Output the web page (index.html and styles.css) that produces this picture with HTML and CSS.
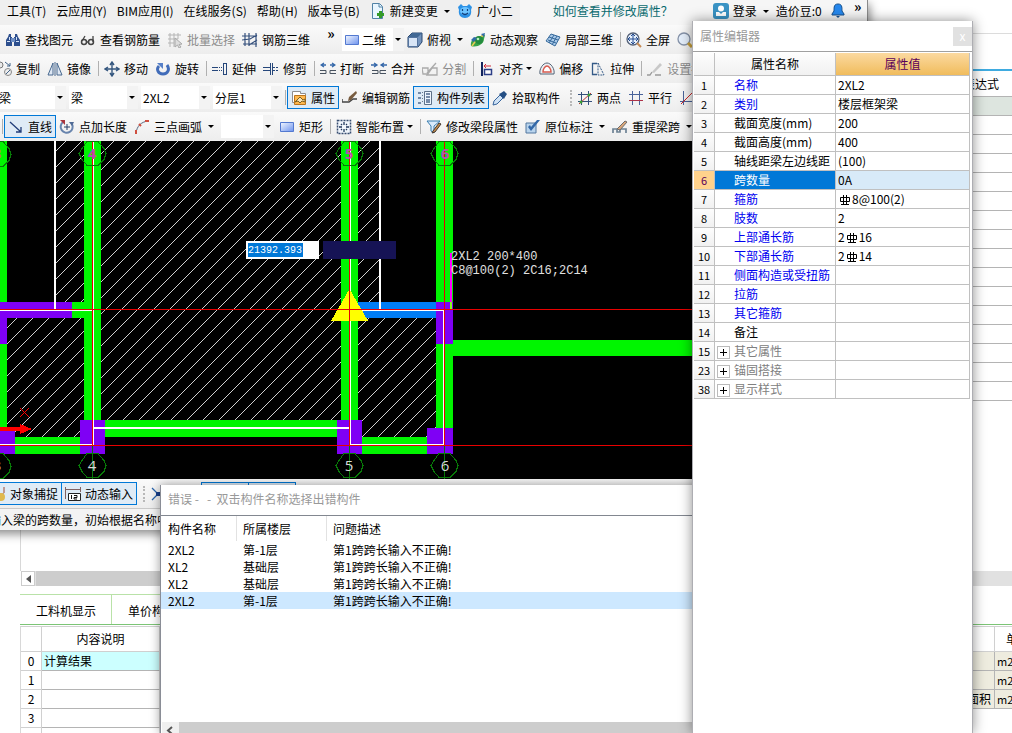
FILE: index.html
```html
<!DOCTYPE html>
<html lang="zh-CN">
<head>
    <meta charset="UTF-8">
    <meta name="viewport" content="width=device-width, initial-scale=1.0">
    <title>属性编辑器</title>
    <link rel="stylesheet" href="styles.css">
</head>
<body>
    <svg class="defs" aria-hidden="true">
        <symbol id="i-find" viewBox="0 0 16 16"><path d="M4 2h2v3h1v9H1V8l2-3zM10 2h2l1 3 2 3v6H9V5h1z" fill="#2d4f8e"/><path d="M6 6h4v4H6z" fill="#6f8fc4"/><path d="M2 9h3v1H2zM11 9h3v1h-3zM4 5h1v3H4zM11 5h1v3h-1z" fill="#d4e2f6"/></symbol>
        <symbol id="i-glasses" viewBox="0 0 16 16"><circle cx="4" cy="10" r="2.5" fill="none" stroke="#444" stroke-width="1.5"/><circle cx="11" cy="10" r="2.5" fill="none" stroke="#444" stroke-width="1.5"/><path d="M2 9l3-5M13 10V4M6 10h3" stroke="#444" fill="none" stroke-width="1.3"/></symbol>
        <symbol id="i-batch" viewBox="0 0 16 16"><path d="M3 1v14M7 1v14M11 1v6M1 3h13M1 7h10M1 11h6" stroke="#b5b5b5" fill="none"/><path d="M8 6l7 6-3 .5 2 2.500-2 1-1.500-3-2.500 2z" fill="#ddd" stroke="#aaa"/></symbol>
        <symbol id="i-rebar3d" viewBox="0 0 16 16"><path d="M3 1v13M7 1v13M14 1v14M0 4h15M0 8l8-1 7-4M1 12h14M7 13l8-5" stroke="#35507c" fill="none" stroke-width="1.200"/></symbol>
        <symbol id="i-rect" viewBox="0 0 16 16"><defs><linearGradient id="rg" x2="1" y2="1"><stop stop-color="#f4f8ff"/><stop offset="1" stop-color="#6c92ee"/></linearGradient></defs><path d="M1.500 3.500h13v9h-13z" fill="url(#rg)" stroke="#5379d0"/></symbol>
        <symbol id="i-cube" viewBox="0 0 16 16"><path d="M1 5l4-4h10v9l-4 5H1z" fill="#7393bd" stroke="#28466f"/><path d="M1.500 5.500h9v9h-9z" fill="#d8e5f6" stroke="#54749f"/><path d="M2 5l3-4h10l-4 4z" fill="#416894"/></symbol>
        <symbol id="i-orbit" viewBox="0 0 16 16"><path d="M1 14C0 8 5 4 10 5l3-3 2 1-1 4C14 12 7 16 1 14z" fill="#3aa348"/><path d="M2 14c3-5 6-8 12-11" stroke="#e9ca54" stroke-width="1.500" fill="none"/><circle cx="9" cy="8" r="4" fill="#238b3e"/><path d="M1 8l3-3 3 1-3 4zM11 2l4-1-1 4z" fill="#306ba8"/><circle cx="8" cy="7" r="1.300" fill="#b7eeba"/></symbol>
        <symbol id="i-local" viewBox="0 0 16 16"><path d="M1 9l5-7 9 3-5 9z" fill="#a9c9e8" stroke="#36699b"/><path d="M4 5l9 3M3 8l8 3M9 3l-5 8M12 4l-5 9" stroke="#36699b" fill="none"/></symbol>
        <symbol id="i-full" viewBox="0 0 16 16"><circle cx="7" cy="7" r="6" fill="#e9f2fd" stroke="#556178" stroke-width="1.300"/><path d="M7 2v10M2 7h10M5 4l2-2 2 2M5 10l2 2 2-2M4 5L2 7l2 2M10 5l2 2-2 2" stroke="#244c91" fill="none"/><path d="M11 11l4 4" stroke="#c58a54" stroke-width="2"/></symbol>
        <symbol id="i-zoom" viewBox="0 0 16 16"><circle cx="7" cy="7" r="6" fill="#e5effb" stroke="#8592a8" stroke-width="1.300"/><path d="M11 11l4 4" stroke="#c9a13c" stroke-width="3"/></symbol>
        <symbol id="i-copy" viewBox="0 0 16 16"><circle cx="4" cy="4" r="3" fill="#e9e9e9" stroke="#777"/><circle cx="12" cy="11" r="3.500" fill="#eee" stroke="#888"/><path d="M10 13l4-4M9 1l5 4M14 2v3h-3" stroke="#436489" fill="none"/></symbol>
        <symbol id="i-mirror" viewBox="0 0 16 16"><path d="M6 2v12H1zM10 2v12h5z" fill="#dfe8f4" stroke="#48698f"/><path d="M8 1v14" stroke="#48698f"/></symbol>
        <symbol id="i-move" viewBox="0 0 16 16"><path d="M8 1v14M1 8h14M6 4l2-3 2 3M6 12l2 3 2-3M4 6L1 8l3 2M12 6l3 2-3 2" stroke="#35577f" fill="none" stroke-width="1.400"/></symbol>
        <symbol id="i-rotate" viewBox="0 0 16 16"><path d="M12 4c3 4 1 9-4 9S1 8 4 5" stroke="#416cb9" stroke-width="3" fill="none"/><path d="M2 2h6v6z" fill="#5780c8"/></symbol>
        <symbol id="i-extend" viewBox="0 0 16 16"><path d="M0 6.500h6M0 9.500h6M11.500 2v12M14.500 2v12M11 2.500h4M11 13.500h4" stroke="#26477b" fill="none"/><path d="M7 6.500h4M7 9.500h4" stroke="#26477b" stroke-dasharray="1 1"/></symbol>
        <symbol id="i-trim" viewBox="0 0 16 16"><path d="M0 6.500h7M0 9.500h7M7.500 2v12M9.500 2v12" stroke="#26477b" fill="none"/><path d="M10 6.500h6M10 9.500h6" stroke="#26477b" stroke-dasharray="2 1"/></symbol>
        <symbol id="i-break" viewBox="0 0 16 16"><path d="M2 4h4M10 4h4M4 2L1 4l3 2M12 2l3 2-3 2" stroke="#3467a9" fill="none" stroke-width="1.300"/><path d="M0 9.500h6v3H0M16 9.500h-6v3h6" fill="none" stroke="#47525f"/></symbol>
        <symbol id="i-merge" viewBox="0 0 16 16"><path d="M0 4h5M11 4h5M3 2l3 2-3 2M13 2l-3 2 3 2" stroke="#3467a9" fill="none" stroke-width="1.300"/><path d="M1 9.500h6v3H1M15 9.500H9v3h6" fill="none" stroke="#47525f"/></symbol>
        <symbol id="i-split" viewBox="0 0 16 16"><path d="M0 7h6v6H1zM15 7h-5L5 14h10zM5 12l9-10" fill="none" stroke="#aaa" stroke-width="1.300"/></symbol>
        <symbol id="i-align" viewBox="0 0 16 16"><path d="M3 1v14" stroke="#14255e" stroke-width="2"/><path d="M5 5h7M7 3L5 5l2 2" stroke="#d12b38" fill="none"/><path d="M5.500 8.500h7v5h-7z" fill="#fff" stroke="#2d3f87" stroke-width="1.500"/></symbol>
        <symbol id="i-offset" viewBox="0 0 16 16"><path d="M1 13C0 8 4 2 8 2s8 6 7 11z" fill="#ecf0f4" stroke="#536375"/><path d="M4 11c0-3 2-6 4-6s4 3 4 6z" fill="#fff" stroke="#d75b4f" stroke-width="1.400"/></symbol>
        <symbol id="i-stretch" viewBox="0 0 16 16"><path d="M7 2.500H2.500v11H7" fill="none" stroke="#345a87" stroke-width="1.300"/><path d="M8 2l6 12H8z" fill="none" stroke="#345a87" stroke-dasharray="2 1"/></symbol>
        <symbol id="i-brush" viewBox="0 0 16 16"><path d="M5 11l8-9 2 2-8 8z" fill="#c8c8c8"/><path d="M0 14h3l2-3M8 14h6" stroke="#999" fill="none" stroke-width="1.300"/></symbol>
        <symbol id="i-prop" viewBox="0 0 16 16"><path d="M1.500 1.500h8v2h5v9h-13z" fill="#fff" stroke="#8e8e8e"/><path d="M3.500 5.500h11v9h-11z" fill="#ffb84e" stroke="#bb751d"/><path d="M4 12l5-5 3 3 2-1v3l-3-1-2 2-2-2z" fill="#f8e3b9" stroke="#7b6021"/></symbol>
        <symbol id="i-edit" viewBox="0 0 16 16"><path d="M0 9v3h7l4-3h4" fill="none" stroke="#444" stroke-width="1.500"/><path d="M6 11l1-4 7-6 1 2-6 7z" fill="#785c3f"/></symbol>
        <symbol id="i-list" viewBox="0 0 16 16"><path d="M7.500 1.500h7v13h-7z" fill="#edf5ff" stroke="#5d7189"/><path d="M1 3h3M1 8h3M1 13h3M9 4h4M9 7h4M9 10h4M9 12h4" stroke="#506a8d" stroke-width="1.500"/><path d="M5.500 2v12" stroke="#6b7b90" stroke-dasharray="1 2"/></symbol>
        <symbol id="i-pick" viewBox="0 0 16 16"><path d="M1 15l1-4 6-6 3 3-6 6z" fill="#cfe2f5" stroke="#37649c"/><path d="M7 4l5 5 1-2 2-3-3-3-3 2z" fill="#244e83"/></symbol>
        <symbol id="i-two" viewBox="0 0 16 16"><path d="M4.500 2v13M11.500 1v14M1 4.500h14M1 11.500h14" stroke="#35507c" fill="none"/><path d="M2 14L14 3" stroke="#b33"/><circle cx="4" cy="12" r="1.500" fill="#3a9e35"/><circle cx="12" cy="5" r="1.500" fill="#3a9e35"/></symbol>
        <symbol id="i-par" viewBox="0 0 16 16"><path d="M4.500 1v14M11.500 1v14M1 4.500h14" stroke="#49639a" fill="none"/><path d="M1 10.500h14" stroke="#ad3349"/></symbol>
        <symbol id="i-angle" viewBox="0 0 16 16"><path d="M4.500 1v14M1 11.500h14" stroke="#49639a" fill="none"/><path d="M2 14L14 2" stroke="#c22"/></symbol>
        <symbol id="i-line" viewBox="0 0 16 16"><path d="M2 3l11 10M13 8v5H8" stroke="#223e79" fill="none" stroke-width="1.300"/></symbol>
        <symbol id="i-plen" viewBox="0 0 16 16"><path d="M4 3a6 6 0 1 0 9 2" stroke="#6884ad" fill="none" stroke-width="2"/><path d="M1 1h5v5z" fill="#a9353e"/><path d="M10 3h5l-2 4z" fill="#4f6a95"/><path d="M8 5v6M5 8h6" stroke="#273f69"/></symbol>
        <symbol id="i-arc" viewBox="0 0 16 16"><path d="M2 14C3 7 7 3 14 2" stroke="#56647c" fill="none"/><path d="M2 11v4M5 5l2 2M11 2h4" stroke="#cf4f3f" stroke-width="2"/></symbol>
        <symbol id="i-smart" viewBox="0 0 16 16"><path d="M1.500 1.500h13v13h-13z" fill="#f1f6fc" stroke="#374d70" stroke-dasharray="2 1" stroke-width="1.500"/><path d="M8 3v3M8 10v3M3 8h3M10 8h3M5 5l1 1M11 5l-1 1M5 11l1-1M11 11l-1-1" stroke="#20365b" stroke-width="1.300"/></symbol>
        <symbol id="i-seg" viewBox="0 0 16 16"><path d="M1 2h13L8 7v7l-3-2V7z" fill="#d8eafb" stroke="#397cae"/><path d="M7 12l6-8 2 1-6 8-3 1z" fill="#c58d4a" stroke="#403832"/></symbol>
        <symbol id="i-mark" viewBox="0 0 16 16"><path d="M1 4h10v10H1z" fill="#b9d4ed" stroke="#52779e"/><path d="M3 8l3 4 9-11-3 0-6 7-1-2z" fill="#3368a8"/></symbol>
        <symbol id="i-span" viewBox="0 0 16 16"><path d="M1 14v-4h4v3h3v-3h6v4" fill="none" stroke="#6d8294" stroke-width="1.700"/><path d="M5 10l8-8 2 1-7 8z" fill="#dba77a" stroke="#6d6d6d"/></symbol>
        <symbol id="i-new" viewBox="0 0 16 16"><path d="M2.500.5h7l3 3v12h-10z" fill="#e9f6ff" stroke="#5182a6"/><path d="M9 1v3h3" fill="none" stroke="#5182a6"/><path d="M10.500 8v7M7 11.500h7" stroke="#359b28" stroke-width="3"/></symbol>
        <symbol id="i-face" viewBox="0 0 16 16"><path d="M1 4l3-3 2 2h4l2-2 3 3-1 3c1 5-2 8-6 8s-7-3-6-8z" fill="#2c91e5"/><ellipse cx="8" cy="8" rx="5" ry="4" fill="#6cc3ff"/><path d="M5.500 6v2M10.500 6v2M5 10c2 2 4 2 6 0" fill="none" stroke="#113f7c" stroke-width="1.200"/></symbol>
        <symbol id="i-user" viewBox="0 0 16 16"><rect width="16" height="16" rx="3" fill="#3a93c4"/><circle cx="8" cy="5.500" r="3" fill="#fff"/><path d="M3 13V9h3l2 2 2-2h3v4z" fill="#fff"/></symbol>
        <symbol id="i-bell" viewBox="0 0 16 16"><path d="M8 1c4 0 4 3 4 7l2 3v1H2v-1l2-3c0-4 0-7 4-7z" fill="#2688ee" stroke="#17518d"/><path d="M6 13h4l-2 2z" fill="#17518d"/></symbol>
        <symbol id="i-snap" viewBox="0 0 16 16"><path d="M14 1v6M9 8h5" stroke="#9e4a35"/><circle cx="11" cy="11" r="4" fill="#e0b94e"/></symbol>
        <symbol id="i-dyn" viewBox="0 0 16 16"><path d="M.5 1v12M15.500 1v5M1 3.500h14" stroke="#816262" fill="none"/><path d="M3.500 7.500h12v7h-12z" fill="#fff" stroke="#222"/><path d="M6.500 9v4M9 9.500h3v2H9v1.500h3" stroke="#111" fill="none"/></symbol>
        <symbol id="i-cross" viewBox="0 0 16 16"><path d="M2 2l6 6-6 6M8 8h8" stroke="#2a65ad" fill="none" stroke-width="1.300"/><path d="M6 6h5v4H6z" fill="#173f8c"/></symbol>
        <symbol id="i-bar" viewBox="0 0 12 12"><path d="M1.500 3.500h9v4h-9zM4.500 1v10M7.500 1v10M2 10.500h8" stroke="#000" fill="none"/></symbol>
    </svg>

    <!-- 计价软件 -->
    <main class="budget">
        <div class="budget-head"></div>
        <div class="budget-bar"></div>
        <div class="budget-body">
            <table class="expr">
                <tr><th>表达式</th></tr>
                <tr class="current"><td></td></tr>
                <tr><td></td></tr><tr><td></td></tr><tr><td></td></tr><tr><td></td></tr><tr><td></td></tr>
                <tr><td></td></tr><tr><td></td></tr><tr><td></td></tr><tr><td></td></tr><tr><td></td></tr>
                <tr><td></td></tr><tr><td></td></tr><tr><td></td></tr><tr><td></td></tr><tr><td></td></tr>
            </table>
        </div>
        <div class="hscroll">
            <button class="hscroll-left" aria-label="向左"></button>
            <div class="hscroll-thumb"></div>
        </div>
        <div class="tabs">
            <button class="tab">工料机显示</button>
            <button class="tab">单价构成</button>
        </div>
        <table class="detail">
            <colgroup><col class="c-no"><col class="c-desc"><col><col class="c-unit"></colgroup>
            <tr><th></th><th>内容说明</th><th></th><th class="unit-head">单位</th></tr>
            <tr class="result"><th>0</th><td class="result-name">计算结果</td><td class="beige"></td><td class="beige">m2</td></tr>
            <tr><th>1</th><td></td><td class="beige"></td><td class="beige">m2</td></tr>
            <tr><th>2</th><td></td><td class="beige area">面积</td><td class="beige">m2</td></tr>
            <tr><th>3</th><td></td><td class="blank"></td><td class="blank"></td></tr>
            <tr><th></th><td></td><td class="blank"></td><td class="blank"></td></tr>
        </table>
    </main>

    <!-- 钢筋算量主窗口 -->
    <section class="cad">
        <nav class="menubar">
            <button>工具(T)</button>
            <button>云应用(Y)</button>
            <button>BIM应用(I)</button>
            <button>在线服务(S)</button>
            <button>帮助(H)</button>
            <button>版本号(B)</button>
            <button class="tool"><svg class="icon"><use href="#i-new"/></svg>新建变更<i class="caret"></i></button>
            <button class="tool"><svg class="icon"><use href="#i-face"/></svg>广小二</button>
            <div class="menubar-right">
                <a class="help" href="#">如何查看并修改属性？</a>
                <button class="tool"><svg class="icon"><use href="#i-user"/></svg>登录<i class="caret"></i></button>
                <button>造价豆:0</button>
                <button class="bell" aria-label="消息"><svg class="icon"><use href="#i-bell"/></svg></button>
                <button class="more">»</button>
            </div>
        </nav>
        <div class="toolbar bar-view">
            <button class="tool"><svg class="icon"><use href="#i-find"/></svg>查找图元</button>
            <button class="tool"><svg class="icon"><use href="#i-glasses"/></svg>查看钢筋量</button>
            <button class="tool" disabled><svg class="icon"><use href="#i-batch"/></svg>批量选择</button>
            <button class="tool"><svg class="icon"><use href="#i-rebar3d"/></svg>钢筋三维</button>
            <button class="more">»</button>
            <label class="combo combo-view"><svg class="icon"><use href="#i-rect"/></svg><select aria-label="视图"><option>二维</option></select></label>
            <button class="tool"><svg class="icon"><use href="#i-cube"/></svg>俯视<i class="caret"></i></button>
            <button class="tool"><svg class="icon"><use href="#i-orbit"/></svg>动态观察</button>
            <button class="tool"><svg class="icon"><use href="#i-local"/></svg>局部三维</button>
            <span class="sep"></span>
            <button class="tool"><svg class="icon"><use href="#i-full"/></svg>全屏</button>
            <button class="tool" aria-label="缩放"><svg class="icon"><use href="#i-zoom"/></svg></button>
        </div>
        <div class="toolbar bar-modify">
            <button class="tool"><svg class="icon"><use href="#i-copy"/></svg>复制</button>
            <button class="tool"><svg class="icon"><use href="#i-mirror"/></svg>镜像</button>
            <span class="sep"></span>
            <button class="tool"><svg class="icon"><use href="#i-move"/></svg>移动</button>
            <button class="tool"><svg class="icon"><use href="#i-rotate"/></svg>旋转</button>
            <span class="sep"></span>
            <button class="tool"><svg class="icon"><use href="#i-extend"/></svg>延伸</button>
            <button class="tool"><svg class="icon"><use href="#i-trim"/></svg>修剪</button>
            <span class="sep"></span>
            <button class="tool"><svg class="icon"><use href="#i-break"/></svg>打断</button>
            <button class="tool"><svg class="icon"><use href="#i-merge"/></svg>合并</button>
            <button class="tool" disabled><svg class="icon"><use href="#i-split"/></svg>分割</button>
            <span class="sep"></span>
            <button class="tool"><svg class="icon"><use href="#i-align"/></svg>对齐<i class="caret tight"></i></button>
            <button class="tool"><svg class="icon"><use href="#i-offset"/></svg>偏移</button>
            <button class="tool"><svg class="icon"><use href="#i-stretch"/></svg>拉伸</button>
            <span class="sep"></span>
            <button class="tool" disabled><svg class="icon"><use href="#i-brush"/></svg>设置拱</button>
        </div>
        <div class="toolbar bar-member">
            <label class="combo"><select aria-label="构件大类"><option>梁</option></select></label>
            <label class="combo"><select aria-label="构件类型"><option>梁</option></select></label>
            <label class="combo"><select aria-label="构件"><option>2XL2</option></select></label>
            <label class="combo"><select aria-label="分层"><option>分层1</option></select></label>
            <span class="sep"></span>
            <button class="tool on"><svg class="icon"><use href="#i-prop"/></svg>属性</button>
            <button class="tool"><svg class="icon"><use href="#i-edit"/></svg>编辑钢筋</button>
            <button class="tool on"><svg class="icon"><use href="#i-list"/></svg>构件列表</button>
            <button class="tool"><svg class="icon"><use href="#i-pick"/></svg>拾取构件</button>
            <span class="grip"></span>
            <button class="tool"><svg class="icon"><use href="#i-two"/></svg>两点</button>
            <button class="tool"><svg class="icon"><use href="#i-par"/></svg>平行</button>
            <button class="tool" aria-label="点角"><svg class="icon"><use href="#i-angle"/></svg></button>
        </div>
        <div class="toolbar bar-draw">
            <span class="sep"></span>
            <button class="tool on"><svg class="icon"><use href="#i-line"/></svg>直线</button>
            <button class="tool"><svg class="icon"><use href="#i-plen"/></svg>点加长度</button>
            <button class="tool"><svg class="icon"><use href="#i-arc"/></svg>三点画弧<i class="caret"></i></button>
            <label class="combo combo-arc"><select aria-label="半径"><option></option></select></label>
            <button class="tool"><svg class="icon"><use href="#i-rect"/></svg>矩形</button>
            <span class="sep"></span>
            <button class="tool"><svg class="icon"><use href="#i-smart"/></svg>智能布置<i class="caret tight"></i></button>
            <span class="sep"></span>
            <button class="tool"><svg class="icon"><use href="#i-seg"/></svg>修改梁段属性</button>
            <button class="tool"><svg class="icon"><use href="#i-mark"/></svg>原位标注<i class="caret"></i></button>
            <button class="tool"><svg class="icon"><use href="#i-span"/></svg>重提梁跨<i class="caret"></i></button>
        </div>

        <div class="canvas">
            <svg class="drawing" shape-rendering="crispEdges">
                <defs>
                    <pattern id="hatch" width="16" height="16" patternUnits="userSpaceOnUse" patternTransform="translate(-1 0)">
                        <path d="M0 16L16 0" stroke="#d0d0d0"/>
                    </pattern>
                </defs>
                <g transform="translate(16 -141)">
                    <!-- 板 -->
                    <path d="M56 141h28v161H56zM101 141h240v279H101zM358 141h22v161h-22zM7 318h77v119H7zM358 318h78v119h-78z" fill="url(#hatch)"/>
                    <!-- 梁 -->
                    <path d="M-16 141H7v290h-23zM84 141h17v279H84zM341 141h17v279h-17zM436 141h17v287h-17zM72 302h12v16H72zM15 437h65v17H15zM105 420h232v17H105zM362 437h65v17h-65zM453 340h431v16H453z" fill="#00f500"/>
                    <path d="M-16 302h88v16H7v26h-23zM-16 431h31v23h-31zM80 420h25v34H80zM337 420h25v34h-25zM427 428h26v26h-26zM436 302h17v42h-17z" fill="#7f00f5"/>
                    <path d="M358 302h78v16h-78z" fill="#007df5"/>
                    <path d="M54 141h2v168h-2zM379 141h2v168h-2zM-16 310h109v1H-16zM93 141h1v304h-1zM94 427h256v2H94zM-16 444H92v1H-16zM350 141h1v304h-1zM351 444h92v1h-92zM443 310h1v135h-1zM351 310h92v1h-92z" fill="#fff"/>
                    <path d="M450 253h2v49h-2z" fill="#f0f"/>
                    <path d="M450 302h2v7h-2z" fill="#8cff1e"/>
                    <path d="M349.500 289L368 321h-37z" fill="#ff0"/>
                    <!-- 轴线 -->
                    <path d="M-16 309h900v1H-16zM-16 445h900v1H-16zM92 141h1v304h-1zM349 141h1v304h-1zM444 141h1v304h-1z" fill="#e80000"/>
                    <path d="M92.500 446v33M349.500 446v33M444.500 446v33" stroke="#087a08"/>
                    <g fill="none" stroke="#087a08">
                        <path d="M-8 141.500h11l6 7 2 6-2 6-6 6H-8M87 141.500h11l6 7 2 5-2 6-6 6H87l-5-6-3-6 3-5zM344 141.500h11l6 7 2 5-2 6-6 6h-11l-5-6-3-6 3-5zM439 141.500h11l6 7 2 5-2 6-6 6h-11l-5-6-3-6 3-5z"/>
                        <path d="M-8 453.500h11l6 7 2 6-2 6-6 6H-8M87 453.500h11l6 7 2 5-2 6-6 6H87l-5-6-3-6 3-5zM344 453.500h11l6 7 2 5-2 6-6 6h-11l-5-6-3-6 3-5zM439 453.500h11l6 7 2 5-2 6-6 6h-11l-5-6-3-6 3-5z"/>
                    </g>
                    <g class="axis-no top"><text x="-3" y="159">3</text><text x="92" y="159">4</text><text x="349" y="159">5</text><text x="445" y="159">6</text></g>
                    <g class="axis-no"><text x="-3" y="471">3</text><text x="92" y="471">4</text><text x="349" y="471">5</text><text x="445" y="471">6</text></g>
                    <path d="M-16 427h36v-3l12 5-12 5v-3h-36z" fill="#f00"/>
                    <path d="M20 408l9 9M29 408l-9 9" stroke="#f00"/>
                    <g class="note"><text x="451" y="260">2XL2 200*400</text><text x="451" y="274">C8@100(2) 2C16;2C14</text></g>
                </g>
            </svg>
            <div class="dyn-input">
                <input class="dyn-x" type="text" value="21392.393" aria-label="X">
                <input class="dyn-y" type="text" aria-label="Y">
            </div>
        </div>

        <div class="toolbar status">
            <button class="tool on"><svg class="icon"><use href="#i-snap"/></svg>对象捕捉</button>
            <button class="tool on"><svg class="icon"><use href="#i-dyn"/></svg>动态输入</button>
            <span class="grip"></span>
            <button class="tool snap" aria-label="交点"><svg class="icon"><use href="#i-cross"/></svg></button>
            <button class="tool on snap" aria-label="垂点"></button>
            <button class="tool on snap" aria-label="中点"></button>
        </div>
        <p class="hint">输入梁的跨数量，初始根据名称中</p>
    </section>

    <!-- 错误列表 -->
    <section class="errors">
        <h2 class="win-title">错误 -&nbsp;&nbsp; -&nbsp; 双击构件名称选择出错构件</h2>
        <table class="error-list">
            <colgroup><col class="c-name"><col class="c-floor"><col></colgroup>
            <thead><tr><th>构件名称</th><th>所属楼层</th><th>问题描述</th></tr></thead>
            <tbody>
                <tr><td>2XL2</td><td>第-1层</td><td>第1跨跨长输入不正确!</td></tr>
                <tr><td>XL2</td><td>基础层</td><td>第1跨跨长输入不正确!</td></tr>
                <tr><td>XL2</td><td>基础层</td><td>第1跨跨长输入不正确!</td></tr>
                <tr class="selected"><td>2XL2</td><td>第-1层</td><td>第1跨跨长输入不正确!</td></tr>
            </tbody>
        </table>
        <div class="error-scroll"><button aria-label="向左"><svg width="8" height="9"><path d="M6 1L2 4.500 6 8" fill="none" stroke="#555" stroke-width="2"/></svg></button></div>
    </section>

    <!-- 属性编辑器 -->
    <aside class="props">
        <header class="props-head">
            <h2 class="win-title">属性编辑器</h2>
            <button class="close" aria-label="关闭">x</button>
        </header>
        <table class="prop-list">
            <colgroup><col class="c-no"><col class="c-key"><col></colgroup>
            <tr><th></th><th>属性名称</th><th class="value-head">属性值</th></tr>
            <tr><th>1</th><td class="key">名称</td><td>2XL2</td></tr>
            <tr><th>2</th><td class="key">类别</td><td>楼层框架梁</td></tr>
            <tr><th>3</th><td class="key plain">截面宽度(mm)</td><td>200</td></tr>
            <tr><th>4</th><td class="key plain">截面高度(mm)</td><td>400</td></tr>
            <tr><th>5</th><td class="key plain">轴线距梁左边线距</td><td>(100)</td></tr>
            <tr class="active"><th>6</th><td class="key">跨数量</td><td>0A</td></tr>
            <tr><th>7</th><td class="key">箍筋</td><td><svg class="rebar"><use href="#i-bar"/></svg>8@100(2)</td></tr>
            <tr><th>8</th><td class="key">肢数</td><td>2</td></tr>
            <tr><th>9</th><td class="key">上部通长筋</td><td>2<svg class="rebar"><use href="#i-bar"/></svg>16</td></tr>
            <tr><th>10</th><td class="key">下部通长筋</td><td>2<svg class="rebar"><use href="#i-bar"/></svg>14</td></tr>
            <tr><th>11</th><td class="key">侧面构造或受扭筋</td><td></td></tr>
            <tr><th>12</th><td class="key">拉筋</td><td></td></tr>
            <tr><th>13</th><td class="key">其它箍筋</td><td></td></tr>
            <tr><th>14</th><td class="key plain">备注</td><td></td></tr>
            <tr><th>15</th><td class="key group"><button aria-label="展开"></button>其它属性</td><td></td></tr>
            <tr><th>23</th><td class="key group"><button aria-label="展开"></button>锚固搭接</td><td></td></tr>
            <tr><th>38</th><td class="key group"><button aria-label="展开"></button>显示样式</td><td></td></tr>
        </table>
    </aside>
</body>
</html>
```
FILE: styles.css
```css
* {
    box-sizing: border-box;
}
body {
    margin: 0;
    height: 100vh;
    position: relative;
    overflow: hidden;
    background: #fff;
    color: #000;
    font-family: "Noto Sans CJK SC", sans-serif;
    font-size: 12px;
    line-height: 16px;
}
button, select, input {
    font: inherit;
    color: inherit;
    margin: 0;
    padding: 0;
    border: 0;
    background: none;
}
table {
    border-collapse: separate;
    border-spacing: 0;
    table-layout: fixed;
    width: 100%;
}
th, td {
    padding: 0;
    font-weight: normal;
    text-align: left;
    white-space: nowrap;
    overflow: hidden;
}
.defs {
    position: absolute;
    width: 0;
    height: 0;
}
.icon {
    width: 16px;
    height: 16px;
    flex: none;
}

/* 计价软件 */
.budget-head {
    height: 34px;
    border-bottom: 1px solid #dcdcdc;
}
.budget-bar {
    height: 37px;
    border-bottom: 2px solid #3fabe0;
}
.budget-body {
    height: 500px;
    margin-left: 20px;
    border-left: 1px solid #d8d8d8;
    display: flex;
    justify-content: flex-end;
    align-items: flex-start;
}
.expr {
    width: 60px;
}
.expr th {
    height: 26px;
    padding-left: 11px;
    border-bottom: 1px solid #b4b4b4;
}
.expr td {
    height: 19px;
    border-bottom: 1px solid #b4b4b4;
}
.expr .current td {
    background: #dde5df;
}
.hscroll {
    display: flex;
    height: 15px;
    margin-left: 21px;
    gap: 1px;
    background: #e1e1e1;
}
.hscroll-left {
    width: 14px;
    border: 1px solid #ccc;
    background: #fff;
    display: flex;
    align-items: center;
    justify-content: center;
}
.hscroll-left::before {
    content: "";
    border: 4px solid transparent;
    border-right: 5px solid #555;
    border-left: 0;
}
.hscroll-thumb {
    width: 70%;
    background: #cdcdcd;
}
.tabs {
    display: flex;
    height: 31px;
    margin-top: 8px;
    margin-left: 20px;
    border-bottom: 1px solid #7cc576;
}
.tab {
    padding: 2px 15px 0 16px;
    border-top: 1px solid #b9e2a8;
    border-right: 1px solid #b9e2a8;
}
.detail {
    margin-top: 1px;
    border-left: 1px solid #d8d8d8;
    margin-left: 20px;
    width: calc(100% + 23px);
    border-top: 1px solid #d0d0d0;
}
.detail .c-no {
    width: 21px;
}
.detail .c-desc {
    width: 118px;
}
.detail .c-unit {
    width: 60px;
}
.detail th, .detail td {
    height: 19px;
    line-height: 16px;
    border-right: 1px solid #d0d0d0;
    border-bottom: 1px solid #b4b4b4;
}
.detail th {
    text-align: center;
    border-bottom-color: #d0d0d0;
}
.detail tr:first-child th {
    height: 25px;
}
.detail tr:first-child .unit-head {
    text-align: left;
    padding-left: 11px;
}
.detail td {
    padding-left: 2px;
}
.detail .result-name {
    background: #ccffff;
}
.detail .beige {
    background: #eeecdf;
    font-size: 11px;
    border-right-color: #b4b4b4;
}
.detail .area {
    text-align: right;
    font-size: 12px;
    padding-right: 3px;
}
.detail .blank {
    border-color: transparent;
}

/* 主窗口 */
.cad {
    position: absolute;
    top: 0;
    left: -16px;
    right: 144px;
    background: #f0f0f0;
    border-right: 1px solid #8a8a8a;
    box-shadow: 2px 4px 9px rgba(0, 0, 0, .45);
    overflow: hidden;
}
.menubar {
    display: flex;
    align-items: center;
    height: 25px;
    padding-left: 23px;
    padding-bottom: 3px;
    background: #efefef;
    white-space: nowrap;
}
.menubar > button {
    margin-right: 10px;
}
.menubar > .tool {
    margin-right: 7px;
}
.menubar-right {
    flex: 1;
    display: flex;
    align-items: center;
    align-self: flex-start;
    height: 25px;
    padding-bottom: 3px;
    background: #f6f6f6;
}
.help {
    color: #0b6b6f;
    text-decoration: none;
    margin-left: 33px;
    margin-right: 40px;
}
.bell {
    margin-left: 8px;
    height: 16px;
}
.toolbar {
    display: flex;
    align-items: center;
    height: 29px;
    overflow: hidden;
    background: linear-gradient(#fafafa, #ededed);
}
.bar-view {
    padding-left: 21px;
}
.bar-modify {
    padding-left: 12px;
}
.bar-member {
    padding-left: 13px;
}
.bar-draw {
    padding-left: 18px;
}
.tool {
    flex: none;
    display: flex;
    align-items: center;
    gap: 4px;
    height: 23px;
    margin-right: 7px;
    white-space: nowrap;
}
.tool:disabled {
    color: #8c8c8c;
}
.tool.on {
    margin-left: -4px;
    margin-right: 3px;
    padding: 0 3px;
    border: 1px solid #0078d7;
    background: #dfebf6;
}
.caret {
    margin-left: 2px;
    border: 3px solid transparent;
    border-top-color: #000;
    border-bottom: 0;
}
.caret.tight {
    margin-left: -1px;
}
.more {
    flex: none;
    align-self: flex-start;
    margin: 0 7px 0 10px;
    width: 8px;
    font-size: 14px;
    font-weight: bold;
}
.menubar-right .more {
    margin: 0 0 0 8px;
    line-height: 12px;
}
.sep {
    flex: none;
    width: 1px;
    height: 15px;
    margin-right: 5px;
    background: #b0b0b0;
}
.grip {
    flex: none;
    height: 16px;
    margin: 0 5px 0 3px;
    border-left: 2px dotted #b8b8b8;
}
.combo {
    flex: none;
    position: relative;
    display: flex;
    align-items: center;
    width: 69px;
    height: 23px;
    margin-right: 3px;
    background: linear-gradient(to right, #fff calc(100% - 11px), #f3f3f3 0);
}
.combo select {
    appearance: none;
    flex: 1;
    min-width: 0;
    height: 23px;
    padding-left: 2px;
    outline: 0;
}
.combo::after {
    content: "";
    position: absolute;
    right: 3px;
    top: 10px;
    border: 3px solid transparent;
    border-top-color: #000;
    border-bottom: 0;
    pointer-events: none;
}
.combo-view {
    width: 62px;
    padding-left: 2px;
}
.combo-arc {
    width: 53px;
    margin-right: 5px;
}
.canvas {
    position: relative;
    background: #000;
}
.drawing {
    display: block;
    width: 100%;
    height: 338px;
}
.axis-no {
    font: 15px "Open Sans", sans-serif;
    fill: #d8d8d8;
    text-anchor: middle;
}
.axis-no.top {
    fill: #b34fb3;
    font-weight: bold;
}
.note {
    font: 12px "Liberation Mono", monospace;
    fill: #e0e0e0;
}
.dyn-input {
    position: absolute;
    left: 262px;
    top: 100px;
    display: flex;
    gap: 4px;
}
.dyn-input input {
    width: 73px;
    height: 18px;
    font: 10px/14px "Liberation Mono", monospace;
    border-radius: 0;
}
.dyn-input .dyn-x {
    border: 2px solid #fff;
    border-right-width: 16px;
    background: #0078d7;
    color: #fff;
}
.dyn-input .dyn-y {
    background: #161355;
    color: #fff;
}
.status {
    padding-left: 6px;
    height: 30px;
    border-bottom: 1px solid #c8c8c8;
}
.snap {
    width: 48px;
}
.hint {
    margin: 0;
    height: 21px;
    padding: 3px 5px 2px;
    background: #f3f3f3;
    white-space: nowrap;
}

/* 错误窗口 */
.win-title {
    margin: 0;
    font-size: 12px;
    font-weight: normal;
    color: #999;
}
.errors {
    position: absolute;
    top: 485px;
    left: 160px;
    right: 60px;
    bottom: 0;
    display: flex;
    flex-direction: column;
    background: #fff;
    border-left: 1px solid #8a8d96;
    box-shadow: 0 0 10px rgba(0, 0, 0, .4);
}
.errors .win-title {
    height: 31px;
    padding: 6px 7px;
    border-bottom: 1px solid #828790;
}
.error-list .c-name {
    width: 76px;
}
.error-list .c-floor {
    width: 90px;
}
.error-list th {
    height: 25px;
    padding-left: 7px;
    border-right: 1px solid #e2e2e2;
}
.error-list th + th, .error-list td + td {
    padding-left: 6px;
}
.error-list td {
    height: 17px;
    padding-left: 7px;
}
.error-list .selected {
    background: #cde8ff;
}
.error-scroll {
    margin-top: auto;
    height: 11px;
    margin-left: 1px;
    background: #cdcdcd;
}
.error-scroll button {
    display: flex;
    align-items: center;
    width: 17px;
    height: 16px;
    padding-left: 4px;
    background: #f0f0f0;
}

/* 属性编辑器 */
.props {
    position: absolute;
    top: 21px;
    right: 39px;
    bottom: 0;
    width: 281px;
    background: #fff;
    border: 1px solid #adadb2;
    border-top: 0;
    border-bottom: 0;
    box-shadow: 0 0 12px rgba(0, 0, 0, .45);
}
.props-head {
    display: flex;
    align-items: center;
    justify-content: space-between;
    height: 31px;
    padding-left: 7px;
    border-bottom: 1px solid #a0a0a0;
}
.close {
    width: 19px;
    height: 19px;
    background: #e1e1e1;
    color: #fff;
    line-height: 16px;
}
.prop-list {
    width: auto;
    margin: 1px 2px 0 1px;
}
.prop-list .c-no {
    width: 21px;
}
.prop-list .c-key {
    width: 121px;
}
.prop-list col:last-child {
    width: 134px;
}
.prop-list th, .prop-list td {
    height: 19px;
    border-right: 1px solid #c0c0c0;
    border-bottom: 1px solid #c0c0c0;
}
.prop-list th {
    text-align: center;
    background: linear-gradient(#fdfdfd, #f1f1f1);
    font-size: 11px;
}
.prop-list tr:first-child th {
    height: 23px;
    font-size: 12px;
}
.prop-list .value-head {
    background: linear-gradient(#fbd9a0, #f0bc5c);
    color: #5a005a;
}
.prop-list td {
    padding-left: 2px;
}
.prop-list .key {
    padding-left: 19px;
    color: #0000f0;
}
.prop-list .plain {
    color: #000;
}
.prop-list .group {
    padding-left: 2px;
    color: #808080;
}
.prop-list .active th {
    background: #ffd28c;
    color: #5a005a;
}
.prop-list .active td {
    background: #d8eaf8;
}
.prop-list .active .key {
    background: #0078d7;
    color: #fff;
}
.group button {
    width: 13px;
    height: 13px;
    margin-right: 4px;
    vertical-align: -2px;
    border: 1px solid #bbb;
    background: linear-gradient(#000, #000) center/7px 1px no-repeat, linear-gradient(#000, #000) center/1px 7px no-repeat;
}
.rebar {
    width: 12px;
    height: 12px;
    margin: 0 1px;
    vertical-align: -2px;
}
```
